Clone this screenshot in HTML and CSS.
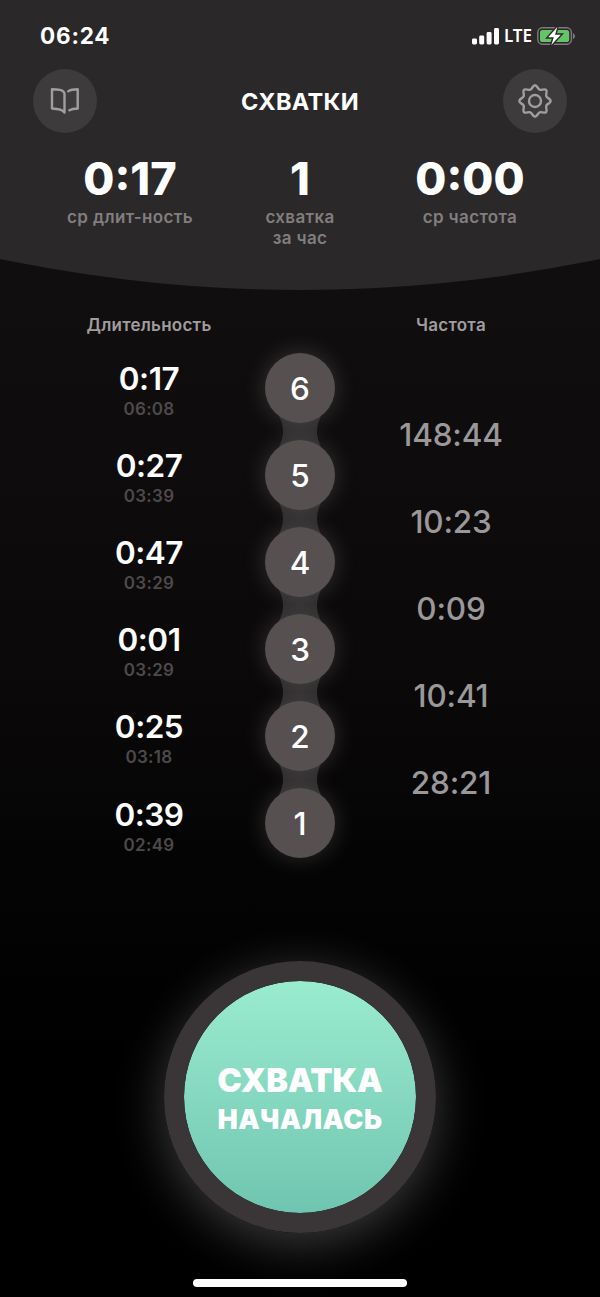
FILE: index.html
```html
<!DOCTYPE html>
<html lang="ru">
<head>
    <meta charset="UTF-8">
    <meta name="viewport" content="width=device-width, initial-scale=1.0">
    <title>Схватки</title>
    <link rel="stylesheet" href="styles.css">
</head>
<body>

<!-- Header -->
<header class="header">
    <div class="status-bar">
        <span class="clock">06:24</span>
        <div class="status-icons">
            <svg width="27" height="17" viewBox="0 0 27 17" fill="#fff">
                <rect x="0" y="10.5" width="5" height="6" rx="1.4"/>
                <rect x="7.2" y="7.5" width="5" height="9" rx="1.4"/>
                <rect x="14.6" y="4" width="5" height="12.5" rx="1.4"/>
                <rect x="22" y="0" width="5" height="16.5" rx="1.4"/>
            </svg>
            <span class="network">LTE</span>
            <svg width="39" height="20" viewBox="0 0 39 20">
                <rect x="0.8" y="1.8" width="33.6" height="16.4" rx="4.6" fill="none" stroke="#7d7b7c" stroke-width="1.4"/>
                <rect x="3" y="4" width="29.2" height="12" rx="2.6" fill="#64c466"/>
                <path d="M36 7.2c2.6.8 2.6 5 0 5.8z" fill="#7d7b7c"/>
                <path d="M20.3 1 11.2 11.3h5.6L14.3 19 23.8 8.7h-5.7z" fill="#fff" stroke="#2a2829" stroke-width="2.8" paint-order="stroke"/>
            </svg>
        </div>
    </div>

    <div class="title-bar">
        <button class="round-button">
            <svg width="30" height="28" viewBox="0 0 30 28" fill="none" stroke="#a09e9f" stroke-width="2.4" stroke-linejoin="round" stroke-linecap="round">
                <path d="M2 2.2C6.5 2.2 14.5 2.5 14.5 7V25.5C12.5 22.5 6.5 21.7 2 21.5z"/>
                <path d="M18.3 4.2C20.5 2.6 24 2.2 27.7 2.2V21.5C24.5 21.5 21.5 22 19.3 23.2"/>
            </svg>
        </button>
        <h1>СХВАТКИ</h1>
        <button class="round-button">
            <svg width="36" height="36" viewBox="-18 -18 36 36" fill="none" stroke="#a09e9f" stroke-width="2.4">
                <path d="M0-15.7C2.2-15.7 2.7-12.1 4.7-11.3C6.7-10.5 9.5-12.7 11.1-11.1C12.7-9.5 10.5-6.7 11.3-4.7C12.1-2.7 15.7-2.2 15.7 0C15.7 2.2 12.1 2.7 11.3 4.7C10.5 6.7 12.7 9.5 11.1 11.1C9.5 12.7 6.7 10.5 4.7 11.3C2.7 12.1 2.2 15.7 0 15.7C-2.2 15.7-2.7 12.1-4.7 11.3C-6.7 10.5-9.5 12.7-11.1 11.1C-12.7 9.5-10.5 6.7-11.3 4.7C-12.1 2.7-15.7 2.2-15.7 0C-15.7-2.2-12.1-2.7-11.3-4.7C-10.5-6.7-12.7-9.5-11.1-11.1C-9.5-12.7-6.7-10.5-4.7-11.3C-2.7-12.1-2.2-15.7 0-15.7Z"/>
                <circle r="6"/>
            </svg>
        </button>
    </div>

    <div class="stats">
        <div class="stat"><b>0:17</b><span>ср длит-ность</span></div>
        <div class="stat"><b>1</b><span>схватка<br>за час</span></div>
        <div class="stat"><b>0:00</b><span>ср частота</span></div>
    </div>
</header>

<!-- History -->
<main class="history">
    <div class="column">
        <h2>Длительность</h2>
        <div class="duration"><b>0:17</b><span>06:08</span></div>
        <div class="duration"><b>0:27</b><span>03:39</span></div>
        <div class="duration"><b>0:47</b><span>03:29</span></div>
        <div class="duration"><b>0:01</b><span>03:29</span></div>
        <div class="duration"><b>0:25</b><span>03:18</span></div>
        <div class="duration last"><b>0:39</b><span>02:49</span></div>
    </div>

    <div class="column beads">
        <div class="bead">6</div>
        <svg class="neck" width="44" height="31"><path d="M1 0Q9 15.5 1 31H43Q35 15.5 43 0z"/></svg>
        <div class="bead">5</div>
        <svg class="neck" width="44" height="31"><path d="M1 0Q9 15.5 1 31H43Q35 15.5 43 0z"/></svg>
        <div class="bead">4</div>
        <svg class="neck" width="44" height="31"><path d="M1 0Q9 15.5 1 31H43Q35 15.5 43 0z"/></svg>
        <div class="bead">3</div>
        <svg class="neck" width="44" height="31"><path d="M1 0Q9 15.5 1 31H43Q35 15.5 43 0z"/></svg>
        <div class="bead">2</div>
        <svg class="neck" width="44" height="31"><path d="M1 0Q9 15.5 1 31H43Q35 15.5 43 0z"/></svg>
        <div class="bead">1</div>
    </div>

    <div class="column frequencies">
        <h2>Частота</h2>
        <div class="frequency">148:44</div>
        <div class="frequency">10:23</div>
        <div class="frequency">0:09</div>
        <div class="frequency">10:41</div>
        <div class="frequency">28:21</div>
    </div>
</main>

<!-- Start button -->
<footer class="footer">
    <button class="start-button">
        <span class="line-big">СХВАТКА</span>
        <span class="line-small">НАЧАЛАСЬ</span>
    </button>
    <div class="home-indicator"></div>
</footer>

</body>
</html>
```
FILE: styles.css
```css
* {
    box-sizing: border-box;
}
body {
    width: 600px;
    height: 1297px;
    margin: 0;
    overflow: hidden;
    display: flex;
    flex-direction: column;
    font-family: Inter, "Liberation Sans", sans-serif;
    color: #fff;
    background: linear-gradient(#100e0f 290px, #0b090a 650px, #000 1050px);
}
h1, h2 {
    margin: 0;
}
svg {
    display: block;
    flex: none;
}
button {
    padding: 0;
    border: none;
    font-family: inherit;
    color: inherit;
}

/* Header with a curved bottom edge */
.header {
    height: 290px;
    flex: none;
    background: #2a2829;
    clip-path: circle(1467px at 50% -1177px);
}
.status-bar {
    height: 69px;
    padding: 3px 24px 0 40px;
    display: flex;
    align-items: center;
    justify-content: space-between;
}
.clock {
    font-size: 22.5px;
    line-height: 28px;
    font-weight: 700;
    letter-spacing: 0.8px;
}
.status-icons {
    display: flex;
    align-items: center;
}
.network {
    margin: 0 5px;
    font-family: "Noto Sans", sans-serif;
    font-size: 17px;
    font-weight: 600;
    line-height: 18px;
}
.title-bar {
    height: 64px;
    padding: 0 33px;
    display: flex;
    align-items: center;
    justify-content: space-between;
}
.title-bar h1 {
    font-size: 23.5px;
    font-weight: 700;
    letter-spacing: 0.3px;
}
.round-button {
    width: 64px;
    height: 64px;
    border-radius: 50%;
    background: #3d3b3c;
    display: flex;
    align-items: center;
    justify-content: center;
}
.stats {
    padding: 19px 45px 0;
    display: grid;
    grid-template-columns: repeat(3, 1fr);
}
.stat {
    display: flex;
    flex-direction: column;
    align-items: center;
    text-align: center;
}
.stat b {
    font-size: 45px;
    line-height: 54px;
    font-weight: 800;
}
.stat span {
    margin-top: 1px;
    font-size: 17px;
    line-height: 20.5px;
    font-weight: 600;
    letter-spacing: 0.35px;
    color: #827e7f;
}

/* History */
.history {
    height: 671px;
    flex: none;
    padding: 24px 34px 0;
    display: grid;
    grid-template-columns: 1fr 72px 1fr;
}
.column {
    display: flex;
    flex-direction: column;
    align-items: center;
}
.column h2 {
    font-size: 17px;
    line-height: 22px;
    font-weight: 600;
    letter-spacing: 0.25px;
    color: #a09d9e;
    margin-bottom: 17px;
}
.duration {
    height: 87px;
    padding-top: 7px;
    display: flex;
    flex-direction: column;
    align-items: center;
}
.duration.last {
    padding-top: 8px;
}
.duration b {
    font-size: 31.5px;
    line-height: 38px;
    font-weight: 600;
    letter-spacing: -0.5px;
}
.duration span {
    font-size: 17px;
    line-height: 22px;
    font-weight: 600;
    letter-spacing: 0.3px;
    color: #4e494a;
}
.beads {
    padding-top: 39px;
}
.bead {
    position: relative;
    width: 70px;
    height: 70px;
    flex: none;
    border-radius: 50%;
    background: #565050;
    box-shadow: 0 0 24px rgba(255, 250, 250, 0.17);
    font-size: 31.5px;
    line-height: 71px;
    font-weight: 550;
    text-align: center;
}
.neck {
    margin: -7px 0;
    fill: #2a2829;
}
.frequencies h2 {
    margin-bottom: 55px;
}
.frequency {
    height: 87px;
    font-size: 31.5px;
    line-height: 87px;
    font-weight: 550;
    letter-spacing: -0.2px;
    color: #9b9899;
}

/* Start button */
.footer {
    display: flex;
    flex-direction: column;
    align-items: center;
}
.start-button {
    width: 272px;
    height: 272px;
    padding-top: 6px;
    border: 20px solid #3a3637;
    border-radius: 50%;
    background: linear-gradient(#9aeccf, #70c5b0) padding-box;
    box-shadow: 0 10px 50px rgba(255, 255, 255, 0.24);
    display: flex;
    flex-direction: column;
    align-items: center;
    justify-content: center;
}
.line-big {
    font-size: 32.5px;
    line-height: 40px;
    font-weight: 900;
    letter-spacing: -0.2px;
}
.line-small {
    font-size: 27px;
    line-height: 38px;
    font-weight: 900;
    letter-spacing: 0.5px;
}
.home-indicator {
    width: 214px;
    height: 8px;
    margin-top: 46px;
    border-radius: 4px;
    background: #fff;
}
```
